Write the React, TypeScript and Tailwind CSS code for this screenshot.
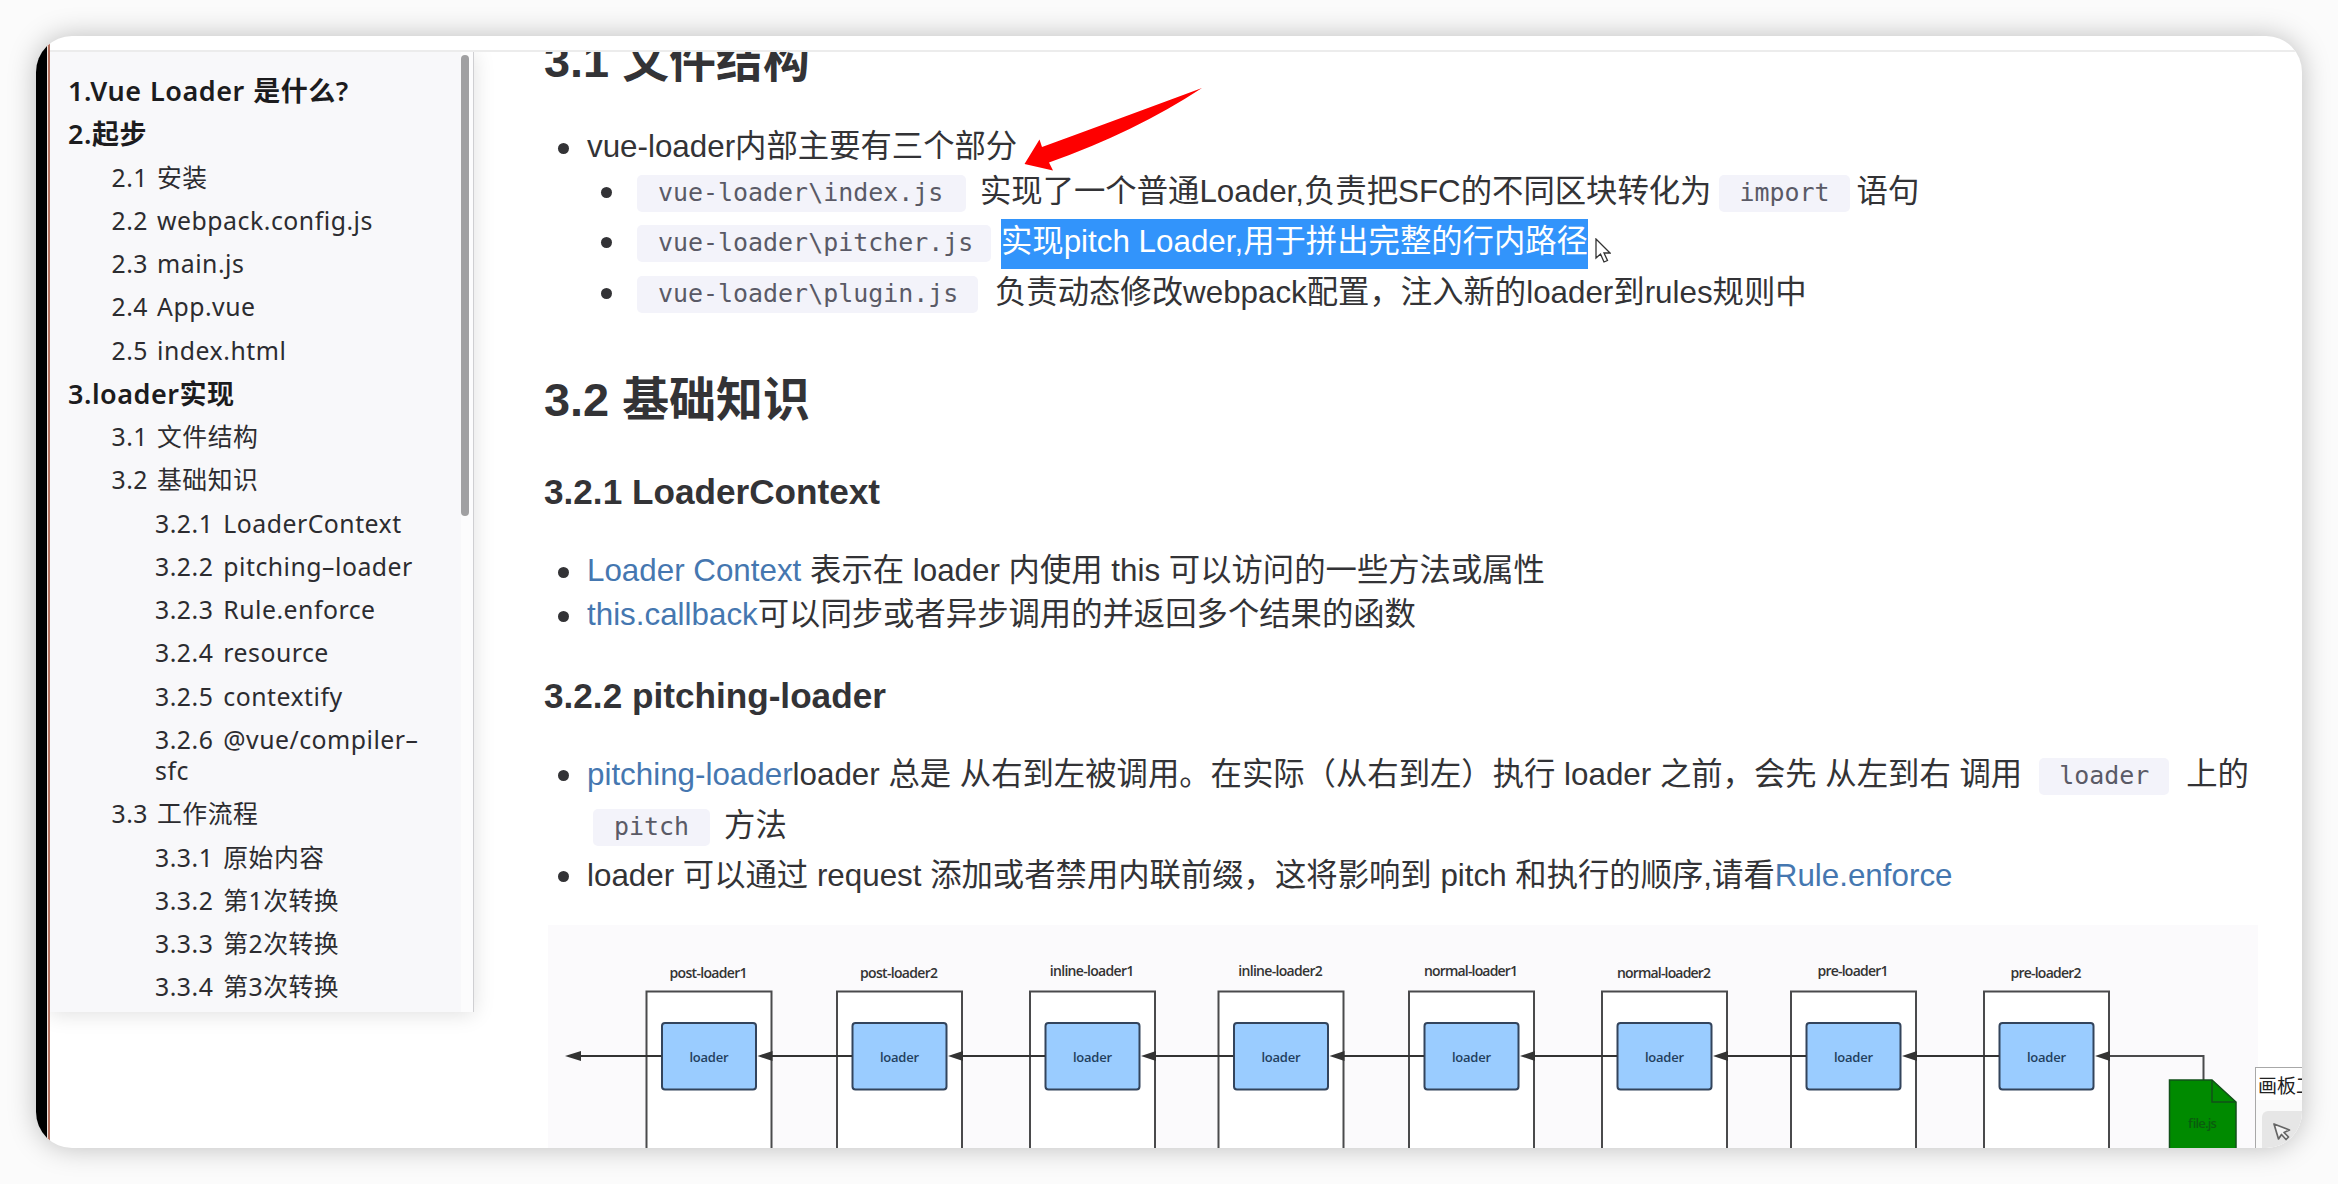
import type { ReactNode } from "react";

type TocEntry = { level: 1 | 2 | 3; text: string };

const toc: TocEntry[] = [
  { level: 1, text: "1.Vue Loader 是什么?" },
  { level: 1, text: "2.起步" },
  { level: 2, text: "2.1 安装" },
  { level: 2, text: "2.2 webpack.config.js" },
  { level: 2, text: "2.3 main.js" },
  { level: 2, text: "2.4 App.vue" },
  { level: 2, text: "2.5 index.html" },
  { level: 1, text: "3.loader实现" },
  { level: 2, text: "3.1 文件结构" },
  { level: 2, text: "3.2 基础知识" },
  { level: 3, text: "3.2.1 LoaderContext" },
  { level: 3, text: "3.2.2 pitching–loader" },
  { level: 3, text: "3.2.3 Rule.enforce" },
  { level: 3, text: "3.2.4 resource" },
  { level: 3, text: "3.2.5 contextify" },
  { level: 3, text: "3.2.6 @vue/compiler–sfc" },
  { level: 2, text: "3.3 工作流程" },
  { level: 3, text: "3.3.1 原始内容" },
  { level: 3, text: "3.3.2 第1次转换" },
  { level: 3, text: "3.3.3 第2次转换" },
  { level: 3, text: "3.3.4 第3次转换" },
];

const tocStyle = {
  1: "text-[27px] font-semibold tracking-[0.5px] [word-spacing:1px] text-[#1c1c1e]",
  2: "pl-[43.5px] text-[24.8px] tracking-[0.52px] [word-spacing:2px] text-[#2c2c30]",
  3: "pl-[87px] text-[24.8px] tracking-[0.5px] [word-spacing:3px] text-[#2c2c30]",
};

function Sidebar() {
  return (
    <aside className="relative z-10 flex h-[960px] w-[424px] shrink-0 border-r border-[#cfcfd2] bg-[#f8f8fa] shadow-[0_2px_20px_rgba(0,0,0,0.13)]">
      <ul className="flex flex-1 flex-col gap-[12px] pt-[23px] pr-[20px] pl-[18px] font-['Noto_Sans','Noto_Sans_CJK_SC',sans-serif] leading-[31.25px]">
        {toc.map((entry) => (
          <li key={entry.text} className={tocStyle[entry.level]}>
            {entry.text}
          </li>
        ))}
      </ul>
      <div className="w-[12px] bg-[#fcfcfd] pt-[3px]">
        <div className="h-[461px] w-[8px] rounded-full bg-[#a0a0a2]" />
      </div>
    </aside>
  );
}

function Code({ children, className }: { children: ReactNode; className: string }) {
  return (
    <code
      className={`inline-block h-[37px] rounded-[5px] bg-[#f3f3fa] align-[1px] font-['DejaVu_Sans_Mono',monospace] text-[24.95px] leading-[36px] text-[#5a5a66] ${className}`}
    >
      {children}
    </code>
  );
}

function Item({ children, className = "" }: { children: ReactNode; className?: string }) {
  return (
    <li className={`flex ${className}`}>
      <span className="mt-[18px] mr-[18px] size-[11px] shrink-0 rounded-full bg-[#333336]" />
      <div>{children}</div>
    </li>
  );
}

function Link({ children }: { children: ReactNode }) {
  return <span className="text-[#4577b0]">{children}</span>;
}

const stages = [
  { x: 646.5, label: "post-loader1", baseline: 978, width: 78 },
  { x: 837, label: "post-loader2", baseline: 978, width: 78 },
  { x: 1030, label: "inline-loader1", baseline: 976, width: 84.5 },
  { x: 1218.5, label: "inline-loader2", baseline: 976, width: 84.5 },
  { x: 1409, label: "normal-loader1", baseline: 976, width: 94 },
  { x: 1602, label: "normal-loader2", baseline: 978, width: 94 },
  { x: 1791, label: "pre-loader1", baseline: 976, width: 71 },
  { x: 1984, label: "pre-loader2", baseline: 978, width: 71 },
];

function Diagram() {
  return (
    <svg
      viewBox="548 925 1710 224"
      className="mt-[24px] ml-[4px] block h-[224px] w-[1710px] bg-[#fbfafc] font-['Open_Sans',sans-serif] text-[14px]"
    >
      {stages.map((s, i) => {
        const tail = i === 0 ? 565 : stages[i - 1].x + 111;
        return (
          <g key={s.label}>
            <rect x={s.x} y={991.5} width={125} height={200} fill="#fff" stroke="#4a4a4c" strokeWidth={2} />
            <rect x={s.x + 15.5} y={1023} width={94} height={66.5} rx={3} fill="#9accff" stroke="#33445c" strokeWidth={2} />
            <text x={s.x + 62} y={s.baseline} textAnchor="middle" textLength={s.width} fill="#333" fontWeight={600}>
              {s.label}
            </text>
            <text x={s.x + 62.5} y={1062} textAnchor="middle" textLength={39} fill="#233f5e" fontSize={13} fontWeight={600}>
              loader
            </text>
            <path d={`M${tail + 14} 1056H${s.x + 15}`} stroke="#333" strokeWidth={2} />
          </g>
        );
      })}
      <path d="M2109 1056H2203.5V1080" fill="none" stroke="#4a4a4c" strokeWidth={2} />
      <path d="M565 1056l16-5v10z" fill="#333" />
      {stages.map((s) => (
        <path key={s.x} d={`M${s.x + 111} 1056l15-5v10z`} fill="#333" />
      ))}
      <path d="M2169.5 1080H2212L2236 1102V1160H2169.5Z" fill="#008a00" stroke="#12501a" strokeWidth={1.5} />
      <path d="M2212 1080V1102H2236" fill="none" stroke="#12501a" strokeWidth={1.5} />
      <text x={2202} y={1128} textAnchor="middle" textLength={29} fill="#0a5c0e" fontSize={13} fontWeight={600}>
        file.js
      </text>
    </svg>
  );
}

function Article() {
  return (
    <main className="ml-[70px] w-[1728px] shrink-0 font-['Liberation_Sans','Noto_Sans_CJK_SC',sans-serif] text-[31.35px] leading-[50.2px] text-[#333336]">
      <h2 className="-mt-[19px] text-[46.9px] leading-[56px] font-bold">3.1 文件结构</h2>
      <ul className="mt-[35.5px] pl-[14px]">
        <Item className="leading-[43.75px]">vue-loader内部主要有三个部分</Item>
        <li>
          <ul className="-mt-[1px] pl-[43px]">
            <Item className="[&>span]:mt-[20px]">
              <Code className="mr-[14px] ml-[7px] w-[329px] pl-[21px]">vue-loader\index.js</Code>
              实现了一个普通Loader,负责把SFC的不同区块转化为
              <Code className="mr-[7px] ml-[8px] px-[20px]">import</Code>
              语句
            </Item>
            <Item className="[&>span]:mt-[20px]">
              <Code className="mr-[10px] ml-[7px] w-[354px] pl-[21px]">vue-loader\pitcher.js</Code>
              <mark className="-mb-[2px] inline-block bg-[#3294fb] pb-[4px] leading-[46px] text-white">
                实现pitch Loader,用于拼出完整的行内路径
              </mark>
            </Item>
            <Item className="[&>span]:mt-[20px]">
              <Code className="mr-[17px] ml-[7px] w-[341px] pl-[21px]">vue-loader\plugin.js</Code>
              负责动态修改webpack配置，注入新的loader到rules规则中
            </Item>
          </ul>
        </li>
      </ul>

      <h2 className="mt-[54px] text-[46.9px] leading-[56px] font-bold">3.2 基础知识</h2>
      <h3 className="mt-[43.5px] text-[35.16px] leading-[42px] font-bold">3.2.1 LoaderContext</h3>
      <ul className="mt-[36px] pl-[14px] leading-[43.75px]">
        <Item>
          <Link>Loader Context</Link> 表示在 loader 内使用 this 可以访问的一些方法或属性
        </Item>
        <Item>
          <Link>this.callback</Link>可以同步或者异步调用的并返回多个结果的函数
        </Item>
      </ul>

      <h3 className="mt-[38px] text-[35.16px] leading-[42px] font-bold">3.2.2 pitching-loader</h3>
      <ul className="mt-[33.5px] pl-[14px]">
        <Item className="[&>span]:mt-[20px]">
          <Link>pitching-loader</Link>loader 总是 从右到左被调用。在实际（从右到左）执行 loader 之前，会先 从左到右 调用
          <Code className="mr-[17px] ml-[17px] px-[20px]">loader</Code>
          上的
          <Code className="mr-[14px] ml-[6px] px-[21px]">pitch</Code>
          方法
        </Item>
        <Item className="[&>span]:mt-[20px]">
          loader 可以通过 request 添加或者禁用内联前缀，这将影响到 pitch 和执行的顺序,请看<Link>Rule.enforce</Link>
        </Item>
      </ul>
      <Diagram />
    </main>
  );
}

function Annotations() {
  return (
    <>
      <svg viewBox="1020 84 186 90" className="absolute top-[48px] left-[984px] z-20 h-[90px] w-[186px]">
        <path d="M1024.5 164L1039.5 139.5L1042 147Q1105 124 1202 88Q1135 132 1049 162.5L1053 170.5Z" fill="#fe0000" />
      </svg>
      <svg viewBox="0 0 16 26" className="absolute top-[202px] left-[1559px] z-20 h-[26px] w-[16px]">
        <path d="M1 1V20L5.5 16L9 24L12.5 22.5L9 15H15Z" fill="#fff" stroke="#333" strokeWidth={1.3} />
      </svg>
      <div className="absolute right-0 bottom-0 z-20 h-[81px] w-[47px] overflow-hidden border-t border-l border-[#a8a8a8] bg-[#fafafa] font-['Noto_Sans_CJK_SC',sans-serif] text-[19px] whitespace-nowrap text-[#222]">
        <div className="h-[32px] bg-white pl-[2px] leading-[34px]">画板工</div>
        <div className="mt-[11px] ml-[6px] flex h-[50px] w-[60px] rounded-[6px] bg-[#e6e6e6] pt-[11px] pl-[10px]">
          <svg viewBox="0 0 20 20" className="size-[20px]">
            <path
              d="M2 2L6.5 17L9.5 12.5L14 17.5L16.5 15L12 10.5L17.5 8Z"
              fill="#f4f4f4"
              stroke="#666"
              strokeWidth={1.7}
              strokeLinejoin="round"
            />
          </svg>
        </div>
      </div>
    </>
  );
}

export default function App() {
  return (
    <div className="h-[1184px] w-[2338px] overflow-hidden bg-[#fbfbfb] p-[36px]">
      <div className="relative flex h-[1112px] w-[2266px] overflow-hidden rounded-[36px] bg-white shadow-[0_0_28px_rgba(0,0,0,0.25)]">
        <div className="w-[11px] shrink-0 bg-black" />
        <div className="w-[3px] shrink-0 border-l border-[#f0e4de] bg-[#b5705e]" />
        <div className="flex w-[2252px] flex-col">
          <div className="h-[16px] shrink-0 border-b-2 border-[#ececec]" />
          <div className="flex flex-1 items-start overflow-hidden">
            <Sidebar />
            <Article />
          </div>
        </div>
        <Annotations />
      </div>
    </div>
  );
}
